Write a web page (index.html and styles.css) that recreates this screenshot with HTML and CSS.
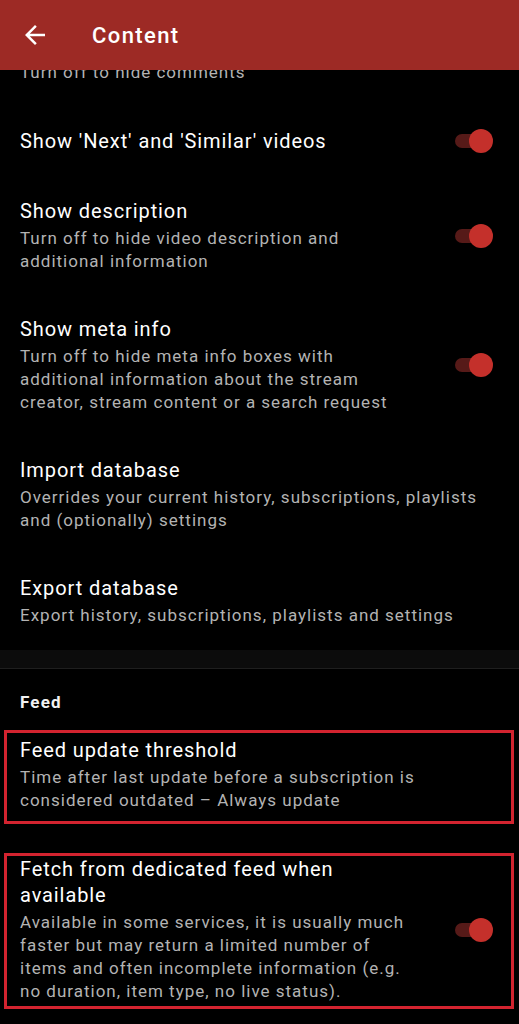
FILE: index.html
```html
<!DOCTYPE html>
<html>
<head>
<meta charset="utf-8">
<link rel="stylesheet" href="styles.css">
</head>
<body>
<header class="appbar">
  <svg class="back" viewBox="0 0 24 24" width="30" height="30"><path d="M20 11H7.83l5.59-5.59L12 4l-8 8 8 8 1.41-1.41L7.83 13H20v-2z" fill="#fff"/></svg>
  <span class="appbar-title">Content</span>
</header>
<main class="list">
  <div class="item cut">
    <div class="text">
      <div class="summary">Turn off to hide comments</div>
    </div>
    <div class="widget"></div>
  </div>
  <div class="item single">
    <div class="text">
      <div class="title">Show 'Next' and 'Similar' videos</div>
    </div>
    <div class="widget"><span class="switch"><span class="track"></span><span class="thumb"></span></span></div>
  </div>
  <div class="item">
    <div class="text">
      <div class="title">Show description</div>
      <div class="summary">Turn off to hide video description and additional information</div>
    </div>
    <div class="widget"><span class="switch"><span class="track"></span><span class="thumb"></span></span></div>
  </div>
  <div class="item">
    <div class="text">
      <div class="title">Show meta info</div>
      <div class="summary">Turn off to hide meta info boxes with additional information about the stream creator, stream content or a search request</div>
    </div>
    <div class="widget"><span class="switch"><span class="track"></span><span class="thumb"></span></span></div>
  </div>
  <div class="item plain">
    <div class="text">
      <div class="title">Import database</div>
      <div class="summary">Overrides your current history, subscriptions, playlists and (optionally) settings</div>
    </div>
  </div>
  <div class="item plain">
    <div class="text">
      <div class="title">Export database</div>
      <div class="summary">Export history, subscriptions, playlists and settings</div>
    </div>
  </div>
  <div class="divider"></div>
  <div class="category">Feed</div>
  <div class="item plain marked first-mark">
    <div class="text">
      <div class="title">Feed update threshold</div>
      <div class="summary">Time after last update before a subscription is considered outdated – Always update</div>
    </div>
  </div>
  <div class="item marked second-mark">
    <div class="text">
      <div class="title">Fetch from dedicated feed when available</div>
      <div class="summary">Available in some services, it is usually much faster but may return a limited number of items and often incomplete information (e.g. no duration, item type, no live status).</div>
    </div>
    <div class="widget"><span class="switch"><span class="track"></span><span class="thumb"></span></span></div>
  </div>
</main>
</body>
</html>
```
FILE: styles.css
```css
html, body {
  margin: 0;
  padding: 0;
  background: #000;
}
body {
  font-family: Roboto, "Noto Sans", sans-serif;
  color: #fff;
  width: 519px;
  height: 1024px;
  overflow: hidden;
}
.appbar {
  position: fixed;
  top: 0;
  left: 0;
  right: 0;
  height: 70px;
  background: #9d2a25;
  z-index: 10;
  display: flex;
  align-items: center;
}
.back {
  margin-left: 20px;
  margin-top: -1px;
  flex: none;
}
.appbar-title {
  margin-left: 42px;
  font-size: 22px;
  font-weight: 500;
  color: #fff;
  letter-spacing: 1.4px;
}
.list {
  padding-top: 11px;
}
.item {
  display: flex;
  align-items: center;
  padding: 21px 0 22px 20px;
}
.item.cut {
  padding-top: 47px;
}
.item.single {
  min-height: 28px;
}
.item.plain {
  padding-right: 20px;
}
.text {
  flex: 1;
  min-width: 0;
}
.title {
  font-size: 20px;
  line-height: 26px;
  letter-spacing: 0.9px;
  color: #fff;
}
.summary {
  margin-top: 3px;
  font-size: 17px;
  line-height: 23px;
  letter-spacing: 1px;
  color: #b3b3b3;
}
.widget {
  flex: none;
  width: 81px;
  padding-right: 26px;
  display: flex;
  justify-content: flex-end;
}
.switch {
  position: relative;
  width: 38px;
  height: 24px;
  display: block;
}
.track {
  position: absolute;
  left: 0;
  top: 5px;
  width: 34px;
  height: 14px;
  border-radius: 7px;
  background: #561a18;
}
.thumb {
  position: absolute;
  right: 0;
  top: 0;
  width: 24px;
  height: 24px;
  border-radius: 50%;
  background: #c4302b;
}
.divider {
  margin-top: 1px;
  height: 18px;
  background: #0c0c0c;
  border-bottom: 1px solid #1f1f1f;
}
.category {
  padding: 22px 20px 0;
  font-size: 17px;
  line-height: 23px;
  font-weight: 700;
  letter-spacing: 1.2px;
  color: #f2f2f2;
}
.marked {
  border: 3px solid #d2232f;
  margin: 0 5px 0 4px;
  padding-left: 13px;
}
.first-mark {
  margin-top: 16px;
  padding-top: 4px;
  padding-bottom: 9px;
  padding-right: 11px;
}
.second-mark {
  margin-top: 29px;
  padding-top: 0;
  padding-bottom: 3px;
}
.second-mark .widget {
  width: 73px;
  padding-right: 18px;
}
```
